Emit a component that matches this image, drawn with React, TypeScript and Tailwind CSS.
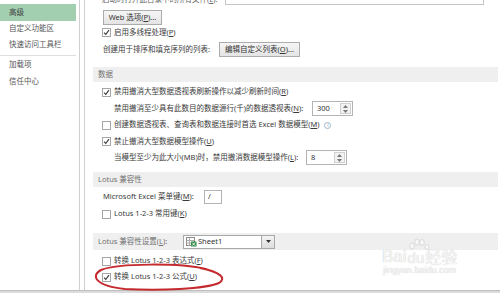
import React from "react";

const font = "font-['Noto_Sans','Noto_Sans_CJK_SC',sans-serif]";

function Check({ checked }: { checked?: boolean }) {
  return (
    <div className="w-[9px] h-[9px] border border-[#a6a6a6] bg-white flex items-center justify-center shrink-0">
      {checked && (
        <svg width="7" height="7" viewBox="0 0 7 7">
          <path d="M1 3.6 L2.8 5.4 L6 1.2" fill="none" stroke="#3a3a3a" strokeWidth="1.1" />
        </svg>
      )}
    </div>
  );
}

function CheckRow({ checked, children, h = "h-[16px]" }: { checked?: boolean; children: React.ReactNode; h?: string }) {
  return (
    <div className={`${h} flex items-center pl-[17px] gap-[3px]`}>
      <Check checked={checked} />
      <span className="whitespace-nowrap">{children}</span>
    </div>
  );
}

function Btn({ children, w }: { children: React.ReactNode; w: string }) {
  return (
    <div className={`${w} h-[15px] border border-[#acacac] bg-gradient-to-b from-[#f6f6f6] to-[#e4e4e4] flex items-center justify-center whitespace-nowrap text-[#333]`}>
      {children}
    </div>
  );
}

function Spin({ value, w }: { value: string; w: string }) {
  return (
    <div className={`${w} h-[15px] border border-[#b4b4b4] bg-white flex items-stretch`}>
      <span className="flex-1 pl-[4px] flex items-center text-[#333]">{value}</span>
      <div className="w-[11px] my-[1px] mr-[1px] border border-[#d0d0d0] bg-[#f2f2f2] flex flex-col items-center justify-center gap-[2px]">
        <svg width="5" height="3" viewBox="0 0 5 3"><path d="M0 3 L2.5 0 L5 3Z" fill="#777" /></svg>
        <svg width="5" height="3" viewBox="0 0 5 3"><path d="M0 0 L2.5 3 L5 0Z" fill="#777" /></svg>
      </div>
    </div>
  );
}

function Header({ children, h = "h-[15px]", mt }: { children: React.ReactNode; h?: string; mt: string }) {
  return (
    <div className={`${h} ${mt} ml-[8px] mr-[2px] bg-[#efefef] flex items-center pl-[5px] text-[#707070]`}>
      {children}
    </div>
  );
}

export default function App() {
  return (
    <div className={`relative w-[500px] h-[293px] bg-white overflow-hidden ${font} text-[7.5px] leading-none text-[#3a3a3a]`}>
      <div className="flex h-[290px]">
        {/* Sidebar */}
        <div className="w-[80px] h-full border-r border-[#cfcfcf] pt-[4px] text-[#555] shrink-0">
          <div className="h-[17px] mr-[3px] bg-[#a3cfb1] flex items-center pl-[9px] text-[#3d3d3d]">高级</div>
          <div className="h-[16px] flex items-center pl-[9px]">自定义功能区</div>
          <div className="h-[16px] flex items-center pl-[9px]">快速访问工具栏</div>
          <div className="h-[1px] mt-[2px] mr-[3px] bg-[#dedede]" />
          <div className="h-[16px] mt-[1px] flex items-center pl-[9px]">加载项</div>
          <div className="h-[17px] flex items-center pl-[9px]">信任中心</div>
        </div>
        {/* Content */}
        <div className="ml-[4px] flex-1 h-full border-l border-[#cfcfcf] flex flex-col">
          <div className="h-[5px] overflow-hidden flex items-end pl-[17px]">
            <span className="whitespace-nowrap leading-[10px] text-[#666] mb-[1px]">启动时打开此目录中的所有文件(<u>L</u>):</span>
            <div className="ml-[8px] w-[259px] h-[14px] border border-[#c4c4c4] bg-white" />
          </div>
          <div className="mt-[5px] pl-[18px] flex">
            <Btn w="w-[59px]">Web 选项(<u>P</u>)...</Btn>
          </div>
          <CheckRow checked h="h-[15px]">启用多线程处理(<u>P</u>)</CheckRow>
          <div className="h-[17px] mt-[1px] flex items-center pl-[18px]">
            <span className="whitespace-nowrap w-[116px]">创建用于排序和填充序列的列表:</span>
            <Btn w="w-[81px]">编辑自定义列表(<u>O</u>)...</Btn>
          </div>

          <Header mt="mt-[9px]">数据</Header>
          <div className="mt-[2px]" />
          <CheckRow checked>禁用撤消大型数据透视表刷新操作以减少刷新时间(<u>R</u>)</CheckRow>
          <div className="h-[17px] flex items-center pl-[29px]">
            <span className="whitespace-nowrap w-[198px]">禁用撤消至少具有此数目的数据源行(千)的数据透视表(<u>N</u>):</span>
            <Spin value="300" w="w-[41px]" />
          </div>
          <div className="h-[16px] flex items-center pl-[17px] gap-[3px]">
            <Check />
            <span className="whitespace-nowrap">创建数据透视表、查询表和数据连接时首选 Excel 数据模型(<u>M</u>)</span>
            <span className="ml-[2px] w-[7px] h-[7px] rounded-full border border-[#9cb5cc] text-[5px] text-[#7f9ab5] flex items-center justify-center">i</span>
          </div>
          <CheckRow checked h="h-[17px]">禁止撤消大型数据模型操作(<u>U</u>)</CheckRow>
          <div className="h-[15px] flex items-center pl-[29px]">
            <span className="whitespace-nowrap w-[192px]">当模型至少为此大小(MB)时，禁用撤消数据模型操作(<u>L</u>):</span>
            <Spin value="8" w="w-[41px]" />
          </div>

          <Header mt="mt-[7px]">Lotus 兼容性</Header>
          <div className="h-[16px] mt-[2px] flex items-center pl-[18px]">
            <span className="whitespace-nowrap w-[101px]">Microsoft Excel 菜单键(<u>M</u>):</span>
            <div className="w-[18px] h-[14px] border border-[#b4b4b4] bg-white pl-[3px] flex items-center">/</div>
          </div>
          <div className="mt-[1px]" />
          <CheckRow>Lotus 1-2-3 常用键(<u>K</u>)</CheckRow>

          <Header mt="mt-[11px]" h="h-[17px]">
            <span className="whitespace-nowrap w-[85px]">Lotus 兼容性设置(<u>L</u>):</span>
            <div className="w-[92px] h-[14px] border border-[#a8a8a8] bg-white flex items-center text-[#333]">
              <svg width="11" height="10" viewBox="0 0 11 10" className="ml-[2px]">
                <rect x="0.5" y="0.5" width="8" height="8" fill="#fff" stroke="#8a8a8a" />
                <path d="M0.5 3.5 H8.5 M0.5 6 H8.5 M3.5 0.5 V8.5" stroke="#aaa" />
                <rect x="5" y="4.5" width="5.5" height="5" fill="#2f8a43" />
                <path d="M6.2 5.6 L9.2 8.6 M9.2 5.6 L6.2 8.6" stroke="#fff" strokeWidth="0.9" />
              </svg>
              <span className="ml-[1px] flex-1">Sheet1</span>
              <div className="w-[13px] h-full border-l border-[#a8a8a8] bg-gradient-to-b from-[#f4f4f4] to-[#dcdcdc] flex items-center justify-center">
                <svg width="5" height="3" viewBox="0 0 5 3"><path d="M0 0 L2.5 3 L5 0Z" fill="#333" /></svg>
              </div>
            </div>
          </Header>
          <div className="mt-[3px]" />
          <CheckRow>转换 Lotus 1-2-3 表达式(<u>F</u>)</CheckRow>
          <CheckRow checked>转换 Lotus 1-2-3 公式(<u>U</u>)</CheckRow>
        </div>
      </div>
      <div className="h-[3px] border-t border-[#bdbdbd] bg-[#dcdcdc]" />

      {/* Baidu watermark */}
      <div className="absolute left-[382px] top-[248px] flex flex-col items-center pointer-events-none">
        <div className="flex items-end relative">
          <span className="text-[17px] font-['Liberation_Sans',sans-serif] text-[#f6f6f6] [text-shadow:0_0_1px_#bcbcbc]">Bai</span>
          <div className="relative mx-[1px]">
            <svg width="24" height="16" viewBox="0 0 24 16" className="absolute left-[-1px] top-[-12px]">
              <g fill="#f8f8f8" stroke="#c8c8c8" strokeWidth="0.6">
                <ellipse cx="5" cy="8" rx="2.3" ry="3" />
                <ellipse cx="10" cy="4" rx="2.3" ry="3" />
                <ellipse cx="15" cy="4.5" rx="2.3" ry="3" />
                <ellipse cx="20" cy="9" rx="2" ry="2.6" />
              </g>
            </svg>
            <span className="text-[15px] font-['Liberation_Sans',sans-serif] text-[#f6f6f6] [text-shadow:0_0_1px_#bcbcbc]">du</span>
          </div>
          <span className="text-[16px] text-[#f6f6f6] [text-shadow:0_0_1px_#bcbcbc]">经验</span>
        </div>
        <span className="text-[9px] font-['Liberation_Sans',sans-serif] text-[#f2f2f2] [text-shadow:0_0_1px_#c4c4c4] mt-[1px]">jingyan.baidu.com</span>
      </div>

      {/* Red hand-drawn ellipse */}
      <svg className="absolute left-0 top-0 pointer-events-none" width="500" height="293" viewBox="0 0 500 293">
        <path
          d="M206 269 C180 263, 118 263, 101 270 C90 276, 96 286, 125 289 C160 291, 205 289, 219 283 C227 278, 220 272, 200 268"
          fill="none"
          stroke="#c52a2e"
          strokeWidth="2"
          strokeLinecap="round"
        />
      </svg>
    </div>
  );
}
